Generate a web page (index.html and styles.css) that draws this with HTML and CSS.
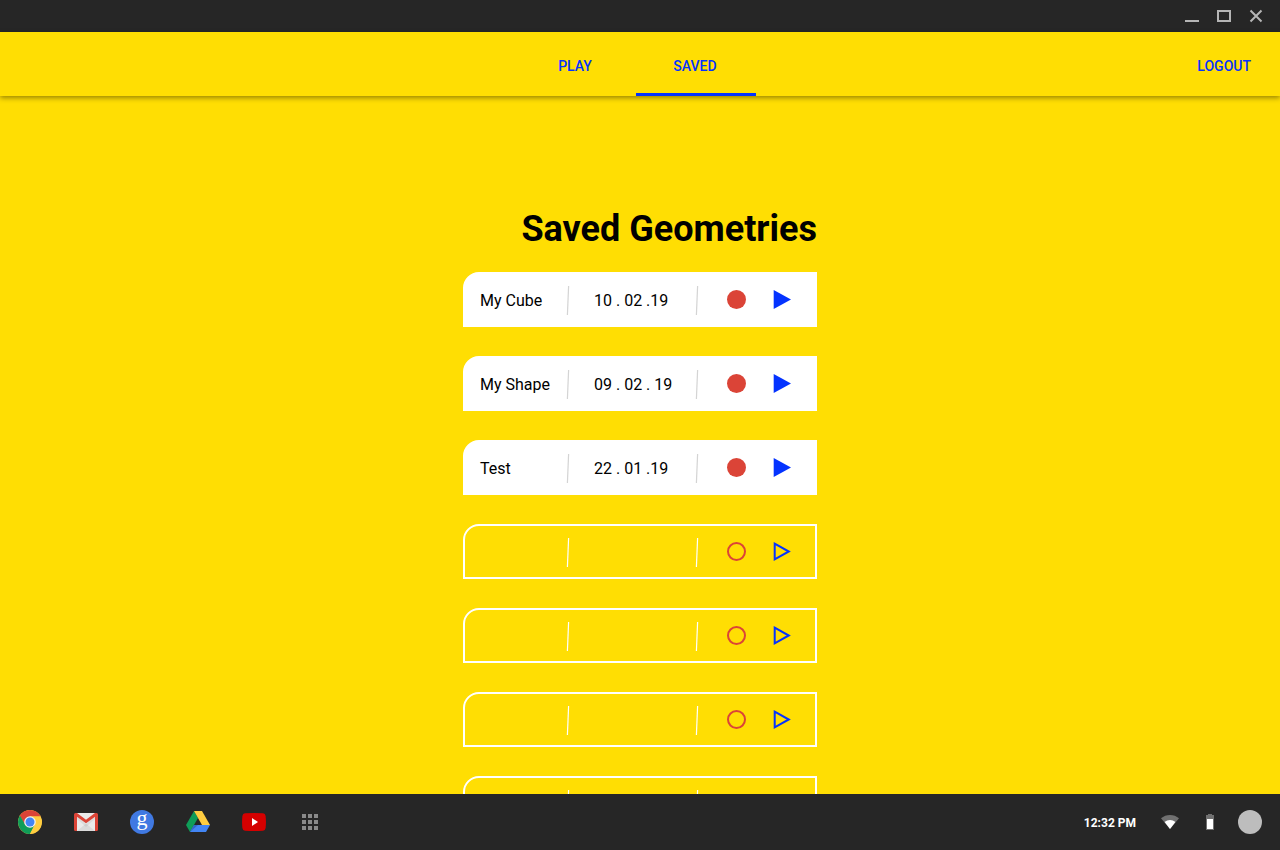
FILE: index.html
```html
<!DOCTYPE html>
<html lang="en">
<head>
<meta charset="utf-8">
<meta name="viewport" content="width=device-width, initial-scale=1">
<title>Saved Geometries</title>
<link rel="stylesheet" href="styles.css">
</head>
<body>
<svg class="defs" width="0" height="0" aria-hidden="true">
  <symbol id="divider" viewBox="0 0 4 29"><path d="M2.6 0L1.4 29" fill="none" stroke="currentColor" stroke-width="1.2"/></symbol>
  <symbol id="record" viewBox="0 0 19 19"><circle cx="9.500" cy="9.500" r="9.500" fill="#db4437"/></symbol>
  <symbol id="record-empty" viewBox="0 0 19 19"><circle cx="9.500" cy="9.500" r="8.500" fill="none" stroke="#db4437" stroke-width="2"/></symbol>
  <symbol id="play" viewBox="0 0 18 19"><path d="M.7 0L18 9.500L.7 19Z" fill="#0433ff"/></symbol>
  <symbol id="play-empty" viewBox="0 0 18 19"><path d="M1.700 1.700L15.800 9.500L1.700 17.300Z" fill="none" stroke="#0433ff" stroke-width="2"/></symbol>
</svg>

<div class="titlebar">
  <button class="window-button" aria-label="Minimize"><svg width="16" height="16" viewBox="0 0 16 16"><path d="M1 13h14" stroke="#b5b5b5" stroke-width="2"/></svg></button>
  <button class="window-button" aria-label="Maximize"><svg width="16" height="16" viewBox="0 0 16 16"><path d="M2 3h12v10H2z" fill="none" stroke="#b5b5b5" stroke-width="2"/></svg></button>
  <button class="window-button" aria-label="Close"><svg width="16" height="16" viewBox="0 0 16 16"><path d="M2.500 2.500l11 11M13.500 2.500l-11 11" stroke="#b5b5b5" stroke-width="2"/></svg></button>
</div>

<header class="header">
  <nav class="tabs" aria-label="Main">
    <a class="tab" href="#play">PLAY</a>
    <a class="tab tab-active" href="#saved" aria-current="page">SAVED</a>
  </nav>
  <button class="logout">LOGOUT</button>
</header>

<main class="content">
  <section class="saved">
    <h1 class="heading">Saved Geometries</h1>
    <ul class="list">
      <li class="slot slot-filled">
        <span class="name">My Cube</span>
        <svg class="divider"><use href="#divider"/></svg>
        <time class="date" datetime="2019-02-10">10 . 02 .19</time>
        <svg class="divider"><use href="#divider"/></svg>
        <button class="action" aria-label="Record My Cube"><svg width="19" height="19"><use href="#record"/></svg></button>
        <button class="action" aria-label="Play My Cube"><svg width="18" height="19"><use href="#play"/></svg></button>
      </li>
      <li class="slot slot-filled">
        <span class="name">My Shape</span>
        <svg class="divider"><use href="#divider"/></svg>
        <time class="date" datetime="2019-02-09">09 . 02 . 19</time>
        <svg class="divider"><use href="#divider"/></svg>
        <button class="action" aria-label="Record My Shape"><svg width="19" height="19"><use href="#record"/></svg></button>
        <button class="action" aria-label="Play My Shape"><svg width="18" height="19"><use href="#play"/></svg></button>
      </li>
      <li class="slot slot-filled">
        <span class="name">Test</span>
        <svg class="divider"><use href="#divider"/></svg>
        <time class="date" datetime="2019-01-22">22 . 01 .19</time>
        <svg class="divider"><use href="#divider"/></svg>
        <button class="action" aria-label="Record Test"><svg width="19" height="19"><use href="#record"/></svg></button>
        <button class="action" aria-label="Play Test"><svg width="18" height="19"><use href="#play"/></svg></button>
      </li>
      <li class="slot">
        <span class="name"></span>
        <svg class="divider"><use href="#divider"/></svg>
        <span class="date"></span>
        <svg class="divider"><use href="#divider"/></svg>
        <button class="action" aria-label="Record slot 4"><svg width="19" height="19"><use href="#record-empty"/></svg></button>
        <button class="action" aria-label="Play slot 4"><svg width="18" height="19"><use href="#play-empty"/></svg></button>
      </li>
      <li class="slot">
        <span class="name"></span>
        <svg class="divider"><use href="#divider"/></svg>
        <span class="date"></span>
        <svg class="divider"><use href="#divider"/></svg>
        <button class="action" aria-label="Record slot 5"><svg width="19" height="19"><use href="#record-empty"/></svg></button>
        <button class="action" aria-label="Play slot 5"><svg width="18" height="19"><use href="#play-empty"/></svg></button>
      </li>
      <li class="slot">
        <span class="name"></span>
        <svg class="divider"><use href="#divider"/></svg>
        <span class="date"></span>
        <svg class="divider"><use href="#divider"/></svg>
        <button class="action" aria-label="Record slot 6"><svg width="19" height="19"><use href="#record-empty"/></svg></button>
        <button class="action" aria-label="Play slot 6"><svg width="18" height="19"><use href="#play-empty"/></svg></button>
      </li>
      <li class="slot">
        <span class="name"></span>
        <svg class="divider"><use href="#divider"/></svg>
        <span class="date"></span>
        <svg class="divider"><use href="#divider"/></svg>
        <button class="action" aria-label="Record slot 7"><svg width="19" height="19"><use href="#record-empty"/></svg></button>
        <button class="action" aria-label="Play slot 7"><svg width="18" height="19"><use href="#play-empty"/></svg></button>
      </li>
    </ul>
  </section>
</main>

<footer class="shelf">
  <div class="apps">
    <button class="app" aria-label="Chrome"><svg width="24" height="24" viewBox="0 0 24 24">
      <circle cx="12" cy="12" r="12" fill="#ffcd40"/>
      <path d="M1.610 6A12 12 0 0 1 22.390 6L22.390 6.500H12L7.240 14.750Z" fill="#db4437"/>
      <path d="M1.610 6A12 12 0 0 0 12 24L16.760 14.750H7.240L2.200 6Z" fill="#0f9d58"/>
      <path d="M12 24A12 12 0 0 0 22.390 6.500H12L16.760 14.750Z" fill="#ffcd40"/>
      <circle cx="12" cy="12" r="5.800" fill="#f1f1f1"/><circle cx="12" cy="12" r="4.500" fill="#4285f4"/>
    </svg></button>
    <button class="app" aria-label="Gmail"><svg width="24" height="24" viewBox="0 0 24 24">
      <path d="M2 3h20v18H2z" fill="#eaeaea"/>
      <path d="M3 21L12 13.500L21 21Z" fill="#dadada"/>
      <path d="M3 5L12 14L21 5V9L12 17L3 9Z" fill="#000" opacity=".06"/>
      <path d="M1.500 3H3L12 9.800L21 3h1.500A1.500 1.500 0 0 1 24 4.500v15a1.500 1.500 0 0 1-1.500 1.500H21V6.700L12 13.300L3 6.700V21H1.500A1.500 1.500 0 0 1 0 19.500v-15A1.500 1.500 0 0 1 1.500 3Z" fill="#db4437"/>
    </svg></button>
    <button class="app" aria-label="Google Search"><svg class="search-icon" width="24" height="24" viewBox="0 0 24 24">
      <circle cx="12" cy="12" r="12" fill="#4079e2"/>
      <text class="search-letter" x="12" y="15" text-anchor="middle">g</text>
    </svg></button>
    <button class="app" aria-label="Drive"><svg width="24" height="24" viewBox="0 0 24 24">
      <path d="M8 1L12 8L4 22L0 15Z" fill="#0f9d58"/>
      <path d="M8 1h8l8 14h-8Z" fill="#ffcd40"/>
      <path d="M4 22L8 15h16l-4 7Z" fill="#4285f4"/>
      <path d="M4 22L8 15L12 15Z" fill="#3367c8"/>
    </svg></button>
    <button class="app" aria-label="YouTube"><svg width="24" height="24" viewBox="0 0 24 24">
      <path d="M3 3.300Q12 2.700 21 3.300Q23.300 3.500 23.600 6Q24.300 12 23.600 18Q23.300 20.500 21 20.700Q12 21.300 3 20.700Q.7 20.500 .4 18Q-.3 12 .4 6Q.7 3.500 3 3.300Z" fill="#d50000"/>
      <path d="M10 8L16 12L10 16Z" fill="#fff"/>
    </svg></button>
    <button class="app" aria-label="All apps"><svg width="24" height="24" viewBox="0 0 24 24">
      <path d="M4 4h4v4H4zM10 4h4v4h-4zM16 4h4v4h-4zM4 10h4v4H4zM10 10h4v4h-4zM16 10h4v4h-4zM4 16h4v4H4zM10 16h4v4h-4zM16 16h4v4h-4z" fill="#8a8a8a"/>
    </svg></button>
  </div>
  <div class="status">
    <time class="clock" datetime="12:32">12:32 PM</time>
    <svg class="wifi" width="18" height="14" viewBox="0 0 18 14" role="img" aria-label="Wi-Fi"><path d="M9 14L0 3.300C2.500 1.200 5.600 0 9 0s6.500 1.200 9 3.300Z" fill="#707070"/><path d="M9 14L3.600 7C5.200 5.700 7 5 9 5s3.800.7 5.400 2Z" fill="#fff"/></svg>
    <svg class="battery" width="8" height="16" viewBox="0 0 8 16" role="img" aria-label="Battery"><path d="M2 0h4v1h2v15H0V1h2z" fill="#707070"/><path d="M1 5h6v10H1z" fill="#fff"/></svg>
    <button class="avatar" aria-label="Account"></button>
  </div>
</footer>
</body>
</html>
```
FILE: styles.css
```css
* {
  box-sizing: border-box;
}

body {
  display: flex;
  flex-direction: column;
  height: 100vh;
  margin: 0;
  overflow: hidden;
  background: #ffde03;
  color: #000;
  font-family: Roboto, "Liberation Sans", sans-serif;
  font-size: 16px;
  line-height: 20px;
}

button {
  padding: 0;
  border: 0;
  background: none;
  color: inherit;
  font: inherit;
  cursor: pointer;
}

svg {
  display: block;
}

.defs {
  position: absolute;
}

.titlebar {
  display: flex;
  flex: none;
  align-items: center;
  justify-content: flex-end;
  gap: 16px;
  height: 32px;
  padding: 0 16px;
  background: #262626;
}

.header {
  z-index: 1;
  display: grid;
  flex: none;
  grid-template-columns: 1fr auto 1fr;
  height: 64px;
  padding: 0 16px 0 8px;
  background: #ffde03;
  box-shadow: 0 2px 5px rgba(0, 0, 0, 0.4);
  color: #0433ff;
  font-size: 14px;
  font-weight: 500;
}

.tabs {
  display: flex;
  grid-column: 2;
}

.tab {
  display: flex;
  align-items: center;
  justify-content: center;
  width: 120px;
  padding: 6px 2px 0 0;
  border-bottom: 3px solid transparent;
  color: inherit;
  text-decoration: none;
}

.tab-active {
  border-color: #0433ff;
}

.logout {
  justify-self: end;
  padding: 4px 13px 0;
}

.content {
  flex: 1;
  min-height: 0;
  padding: 113px 16px 0;
  overflow: hidden;
}

.saved {
  width: 354px;
  max-width: 100%;
  margin: 0 auto;
}

.heading {
  margin: 0 0 23px;
  font-size: 36px;
  font-weight: 700;
  line-height: 40px;
  text-align: right;
}

.list {
  display: grid;
  gap: 29px;
  margin: 0;
  padding: 0;
  list-style: none;
}

.slot {
  display: flex;
  align-items: center;
  height: 55px;
  padding: 0 24px 0 15px;
  border: 2px solid #fff;
  border-radius: 16px 0 0;
  color: #fff;
}

.slot-filled {
  background: #fff;
  color: #d4d4d4;
}

.name {
  width: 86px;
  padding-top: 2px;
  color: #000;
}

.date {
  flex: 1;
  padding: 2px 0 0 24px;
  color: #000;
}

.divider {
  flex: none;
  width: 4px;
  height: 29px;
  margin-top: 2px;
}

.action {
  margin-left: 27px;
}

.divider + .action {
  margin-left: 28px;
}

.shelf {
  z-index: 1;
  display: flex;
  flex: none;
  align-items: center;
  justify-content: space-between;
  height: 56px;
  padding: 0 18px;
  background: #262626;
  color: #fff;
}

.apps {
  display: flex;
  gap: 32px;
}

.search-icon {
  overflow: visible;
}

.search-letter {
  fill: #fff;
  font-family: "Liberation Serif", serif;
  font-size: 22px;
}

.status {
  display: flex;
  align-items: center;
}

.clock {
  margin-right: 25px;
  padding-top: 2px;
  font-size: 12px;
  font-weight: 700;
}

.wifi {
  margin-right: 27px;
}

.battery {
  margin-right: 24px;
}

.avatar {
  width: 24px;
  height: 24px;
  border-radius: 50%;
  background: #bdbdbd;
}
```
